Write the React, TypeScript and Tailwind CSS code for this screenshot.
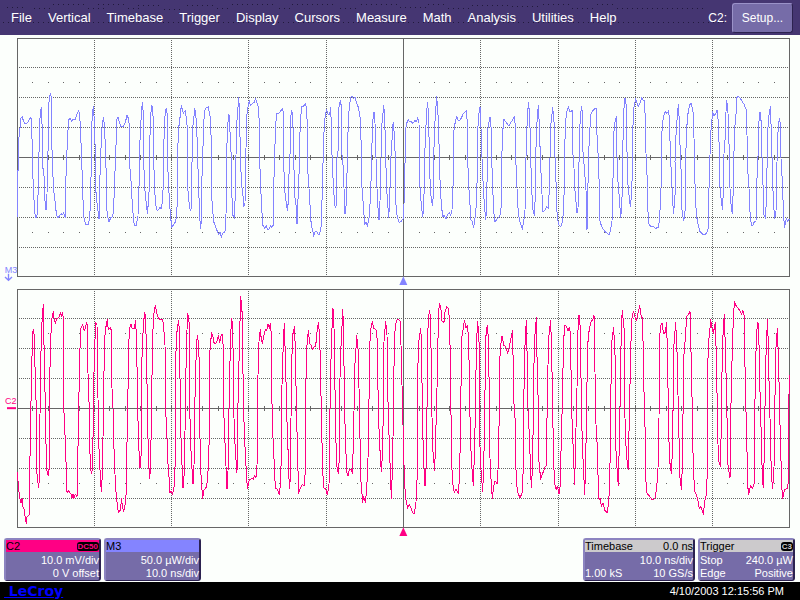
import type { ReactNode } from "react";

const menuItems = [
  "File",
  "Vertical",
  "Timebase",
  "Trigger",
  "Display",
  "Cursors",
  "Measure",
  "Math",
  "Analysis",
  "Utilities",
  "Help",
];

// x,y pairs on the 2400 x 753 scope canvas
const powerTrace = `52,547 52,407 55,407 55,325 58,297 61,270 63,250 67,244 70,258 75,267 82,264 86,258 91,247 94,252 97,340 97,372 100,460 103,512 106,547 109,547 112,535 115,455 115,375 118,340 118,280 121,235 124,217 127,290 127,385 133,430 133,460 136,515 138,525 141,480 142,365 145,340 145,215 149,185 151,175 154,188 154,300 157,365 160,455 163,485 167,512 169,540 174,550 180,540 184,536 187,540 191,533 196,547 197,450 200,370 203,300 206,255 211,250 215,260 219,252 225,255 230,240 236,227 239,235 242,300 245,370 248,470 251,545 257,568 266,568 270,530 272,455 275,370 275,275 278,225 281,215 284,297 287,380 287,460 290,495 293,520 297,553 299,547 299,450 302,365 305,290 308,260 311,248 314,285 317,365 320,460 320,520 323,545 327,562 332,548 338,545 341,520 344,430 347,370 350,255 354,247 358,262 363,275 369,275 376,263 381,240 385,250 388,270 388,375 394,450 397,510 400,545 403,572 408,572 414,545 415,460 418,450 418,355 421,295 424,235 427,203 430,235 431,380 434,455 437,490 440,515 442,535 445,505 448,455 448,355 451,275 454,210 457,215 460,255 461,375 464,460 466,500 470,525 475,525 480,518 485,522 489,465 491,455 491,355 493,275 496,230 499,220 502,240 502,365 506,455 509,510 512,545 515,577 520,570 525,563 530,545 533,460 533,350 536,280 541,240 544,211 547,225 550,235 556,226 559,250 562,280 563,365 563,455 567,500 571,528 574,520 575,400 578,350 578,280 582,245 584,220 587,238 590,270 593,370 596,460 599,545 602,580 605,545 605,455 608,365 611,275 613,230 617,220 625,215 628,232 632,255 634,340 634,460 637,515 641,560 648,578 656,600 660,592 664,607 668,595 675,590 678,540 679,460 680,355 683,270 687,238 689,270 693,350 694,370 695,460 698,540 704,550 706,455 708,360 710,270 713,230 716,187 719,235 721,370 725,450 730,490 731,515 735,510 736,370 738,340 740,245 744,215 748,195 751,213 758,205 763,202 766,190 770,200 775,215 778,265 779,360 781,440 784,495 788,570 795,580 799,570 802,582 807,582 812,572 816,577 820,570 821,460 824,360 827,265 831,235 836,235 842,228 848,222 850,235 851,365 853,455 857,490 862,527 865,500 868,380 871,345 871,270 874,225 878,235 881,365 884,480 888,510 891,568 893,530 895,455 898,400 898,355 901,260 905,215 911,213 916,205 919,217 922,270 923,400 927,460 930,510 934,575 938,585 941,605 944,592 949,588 955,600 959,597 964,570 967,460 970,350 973,265 977,235 980,222 983,237 989,237 992,218 994,270 996,360 1000,450 1004,510 1007,517 1010,505 1011,370 1014,350 1015,230 1019,205 1022,197 1025,230 1025,350 1030,400 1032,460 1034,535 1037,535 1040,470 1042,360 1045,260 1048,215 1052,187 1056,185 1060,190 1066,188 1070,205 1075,217 1080,245 1085,360 1086,460 1090,510 1094,570 1098,560 1102,574 1107,550 1112,480 1115,360 1118,260 1122,232 1125,265 1128,370 1131,460 1134,520 1137,556 1140,500 1143,370 1146,265 1151,212 1154,240 1157,365 1160,460 1166,548 1169,500 1172,380 1175,335 1178,275 1180,262 1183,300 1186,370 1187,500 1191,540 1197,562 1203,560 1209,552 1210,548 1212,510 1214,400 1216,370 1216,290 1220,265 1225,254 1228,260 1233,259 1239,265 1245,257 1250,260 1253,247 1257,265 1258,370 1260,455 1264,510 1268,545 1271,520 1273,440 1275,340 1278,270 1282,203 1286,235 1288,370 1291,460 1294,495 1298,512 1301,455 1301,370 1304,275 1310,185 1313,220 1316,275 1318,375 1321,465 1325,520 1329,545 1332,541 1338,553 1342,541 1348,532 1352,541 1356,525 1359,455 1361,380 1361,295 1364,270 1370,245 1374,255 1379,257 1385,247 1390,235 1397,230 1400,227 1402,275 1403,370 1406,450 1411,525 1413,555 1417,560 1421,577 1425,550 1430,500 1432,390 1434,275 1437,235 1440,215 1443,280 1446,370 1450,460 1454,520 1457,553 1460,520 1462,370 1464,280 1470,245 1473,275 1475,370 1478,455 1481,530 1485,562 1490,553 1496,547 1501,538 1504,510 1505,380 1508,290 1512,253 1519,263 1526,273 1533,262 1538,255 1543,245 1546,275 1547,365 1551,460 1554,520 1558,555 1567,583 1571,560 1575,525 1577,460 1578,365 1581,275 1585,203 1589,235 1592,365 1595,465 1599,525 1603,542 1607,460 1607,370 1610,275 1615,210 1618,270 1621,365 1625,460 1629,530 1635,525 1640,515 1645,520 1648,460 1650,370 1652,275 1658,218 1662,260 1665,365 1669,465 1671,530 1675,567 1682,575 1687,560 1690,535 1693,455 1694,355 1696,270 1700,230 1705,215 1710,230 1717,227 1719,360 1722,400 1724,455 1728,500 1731,535 1734,520 1736,400 1739,350 1739,280 1742,245 1744,214 1748,235 1749,350 1753,400 1758,465 1761,585 1763,520 1765,375 1769,295 1772,240 1777,228 1785,220 1790,222 1791,300 1795,370 1798,460 1799,555 1805,575 1815,590 1828,600 1832,580 1836,560 1838,460 1841,370 1841,300 1845,260 1849,245 1851,365 1854,440 1858,490 1862,547 1865,520 1867,455 1868,360 1871,230 1875,190 1880,220 1881,350 1884,450 1888,490 1891,515 1895,475 1898,370 1899,270 1902,215 1907,190 1911,205 1915,214 1920,205 1925,188 1929,195 1934,197 1936,270 1938,355 1942,440 1944,530 1947,567 1951,573 1960,575 1967,580 1975,577 1979,550 1983,460 1985,370 1986,290 1990,245 1996,230 2001,235 2006,228 2009,265 2011,370 2015,420 2017,490 2021,535 2025,480 2025,380 2028,300 2031,255 2035,208 2038,260 2041,365 2044,420 2046,525 2051,558 2055,530 2057,370 2060,280 2065,225 2070,208 2074,205 2080,235 2082,310 2084,420 2088,520 2092,560 2100,590 2108,598 2115,600 2121,592 2125,580 2127,460 2130,360 2133,285 2138,230 2141,243 2146,238 2151,226 2155,260 2158,350 2160,455 2164,500 2168,523 2170,460 2171,370 2175,315 2178,230 2180,195 2184,235 2188,355 2190,460 2194,520 2197,535 2200,460 2202,350 2205,270 2209,225 2211,187 2215,184 2221,190 2227,200 2232,208 2238,222 2241,300 2243,400 2247,460 2250,530 2254,572 2259,570 2263,560 2268,558 2270,450 2274,365 2276,270 2280,230 2284,265 2286,365 2289,450 2292,540 2297,550 2300,455 2303,290 2307,240 2311,215 2314,290 2317,400 2320,500 2324,550 2328,530 2331,380 2334,290 2338,250 2342,270 2343,370 2347,440 2350,520 2353,577 2356,565 2359,550 2363,560 2366,553 2369,553`;

const voltageTrace = `52,560 55,600 58,632 63,655 67,640 68,665 73,675 76,700 79,715 81,695 88,690 89,577 92,400 95,250 98,147 100,133 103,155 106,290 109,372 109,540 112,580 116,607 119,570 120,390 122,240 125,125 130,58 131,130 134,278 137,400 139,550 145,572 148,545 149,295 152,160 156,100 160,80 162,100 166,115 171,100 177,97 181,83 184,95 188,82 191,115 191,360 196,470 199,560 201,622 206,617 213,628 216,638 219,628 221,642 226,627 231,637 233,540 236,375 239,220 242,130 248,118 253,138 257,125 260,112 263,130 264,265 268,380 269,480 272,555 275,567 278,540 281,300 284,190 287,112 291,120 294,340 296,470 300,555 304,620 308,550 309,460 311,310 314,160 318,125 322,103 325,135 331,127 335,140 336,310 339,370 341,460 344,550 348,620 353,670 355,682 361,675 365,640 367,665 371,680 375,660 379,620 380,525 383,370 386,200 388,130 393,118 397,132 403,130 407,106 410,180 413,370 416,480 420,550 424,500 425,240 430,120 434,82 437,97 440,240 443,400 445,520 449,580 452,540 454,400 457,210 460,95 466,60 470,85 475,98 480,105 486,103 490,115 495,180 497,390 500,410 502,510 506,560 510,625 514,618 518,628 523,600 526,520 526,280 529,160 532,130 536,105 539,155 540,280 543,460 546,540 549,610 553,560 555,440 558,250 561,135 563,85 567,110 568,300 571,450 574,520 579,597 583,520 584,370 587,270 589,185 592,150 596,180 598,250 600,460 602,550 604,590 608,640 612,615 620,605 624,560 627,490 628,220 632,170 635,143 639,155 642,173 646,177 651,168 655,152 659,172 664,148 668,150 670,200 671,370 674,450 677,520 681,613 684,560 686,420 689,270 692,150 695,100 698,120 700,250 702,400 706,500 711,563 713,400 716,270 719,150 722,35 727,90 730,350 733,440 736,510 742,610 748,585 755,580 760,583 764,570 768,578 771,540 773,450 774,270 777,170 781,132 784,165 787,175 792,150 797,132 800,137 804,118 808,130 811,115 814,150 815,320 819,460 823,540 826,610 832,613 838,628 842,590 845,460 846,300 850,170 853,115 857,250 861,410 865,520 868,610 871,580 873,400 875,240 878,150 884,125 887,250 890,400 893,520 896,625 900,612 907,598 912,603 916,560 917,335 920,190 925,137 929,175 934,182 938,195 942,185 947,185 950,150 955,112 959,150 962,280 965,430 968,560 972,610 977,612 982,630 987,600 989,430 992,260 995,150 999,70 1002,130 1004,250 1007,440 1010,540 1015,565 1018,520 1019,320 1022,200 1025,150 1028,72 1031,130 1033,350 1037,480 1040,560 1044,573 1048,555 1053,552 1057,565 1060,480 1062,380 1064,250 1068,190 1070,152 1075,200 1077,310 1080,460 1083,590 1088,652 1091,635 1096,652 1100,615 1104,520 1106,430 1109,180 1113,130 1117,108 1121,130 1129,135 1132,170 1135,380 1139,480 1144,560 1148,500 1150,350 1152,170 1157,108 1161,150 1164,350 1168,480 1174,640 1177,560 1179,460 1181,280 1185,140 1189,107 1193,102 1200,108 1203,180 1206,300 1209,420 1211,510 1214,600 1218,645 1223,670 1228,657 1234,672 1240,687 1243,685 1248,650 1251,590 1253,260 1257,165 1262,130 1265,180 1267,400 1271,530 1275,603 1280,520 1281,370 1284,130 1288,75 1292,100 1295,360 1299,500 1304,558 1307,460 1311,310 1314,160 1317,70 1319,55 1323,75 1325,108 1332,112 1335,80 1340,65 1345,70 1349,110 1352,310 1355,540 1359,600 1363,622 1368,612 1375,625 1379,570 1382,380 1385,160 1390,130 1393,105 1398,130 1402,122 1406,160 1409,350 1412,480 1416,550 1420,603 1424,480 1427,340 1429,180 1433,108 1437,170 1438,430 1442,540 1448,620 1451,550 1454,400 1457,160 1462,120 1466,170 1468,370 1470,520 1474,600 1477,640 1481,605 1485,587 1491,597 1495,540 1498,370 1499,230 1502,180 1506,153 1511,180 1517,185 1523,205 1528,185 1532,165 1538,137 1541,340 1545,400 1547,530 1550,600 1554,625 1560,638 1566,625 1570,550 1571,370 1574,200 1579,107 1582,240 1584,370 1588,450 1592,560 1594,607 1598,540 1600,370 1603,170 1609,98 1612,270 1615,360 1617,530 1622,583 1628,565 1635,547 1640,540 1641,400 1644,240 1647,150 1652,107 1655,200 1658,370 1661,540 1665,600 1669,615 1672,603 1677,628 1681,600 1683,500 1687,350 1689,250 1693,120 1698,122 1704,138 1708,128 1712,150 1714,350 1718,450 1724,598 1727,470 1731,310 1733,150 1737,90 1741,130 1744,350 1747,480 1751,560 1754,630 1757,540 1760,350 1763,180 1768,130 1773,110 1779,103 1782,90 1785,260 1787,400 1791,470 1795,600 1797,643 1801,640 1804,665 1809,655 1814,675 1821,683 1826,655 1829,590 1832,430 1834,180 1838,150 1841,128 1845,210 1847,480 1851,550 1855,602 1859,430 1862,250 1864,120 1867,77 1872,130 1875,400 1879,510 1885,555 1887,440 1890,300 1893,170 1896,100 1900,78 1905,95 1909,107 1914,85 1919,62 1923,90 1927,100 1930,200 1932,320 1936,460 1938,590 1941,625 1950,635 1956,645 1965,640 1970,610 1974,550 1977,410 1978,160 1983,120 1986,115 1991,147 1997,140 1999,112 2002,180 2005,370 2008,520 2014,565 2018,480 2021,190 2027,112 2031,200 2034,330 2037,460 2040,580 2045,615 2048,480 2051,220 2056,160 2060,95 2066,88 2070,78 2073,200 2077,380 2080,560 2085,620 2093,640 2098,672 2103,665 2110,688 2114,650 2119,630 2122,560 2122,270 2126,170 2130,130 2132,103 2136,130 2140,145 2146,112 2150,250 2153,460 2157,530 2161,545 2164,420 2166,260 2169,150 2173,88 2177,220 2180,350 2184,540 2190,580 2192,400 2196,230 2199,130 2203,50 2208,62 2215,70 2221,80 2225,90 2228,75 2233,95 2235,245 2238,380 2241,500 2243,600 2246,630 2252,600 2257,610 2263,595 2264,400 2267,230 2270,140 2274,112 2278,200 2280,320 2284,460 2287,580 2290,607 2293,500 2296,300 2299,170 2303,103 2306,250 2310,400 2314,570 2318,610 2322,550 2324,400 2327,200 2332,130 2336,240 2339,380 2342,490 2345,600 2348,640 2353,615 2362,610 2365,590 2366,360 2369,270`;

const columns = [283, 514, 745, 979, 1441, 1675, 1906, 2137];
const rows = [97, 187, 277, 457, 547, 637];
const ticks = Array.from({ length: 49 }, (_, i) => i + 1).filter((i) => i % 5 !== 0);

function tickX(i: number) {
  return Math.round(17 + i * 15.45 - 0.2) * 3 + 1;
}

type ScopeProps = {
  name: string;
  color: string;
  points: string;
  shift: number;
  children: ReactNode;
};

function Scope({ name, color, points, shift, children }: ScopeProps) {
  return (
    <svg viewBox="0 0 2400 753" className="block w-full h-auto" role="img" aria-label={name}>
      <g fill="none" stroke="#666666" strokeWidth="3" shapeRendering="crispEdges">
        <g strokeDasharray="3 3">
          {columns.map((x) => (
            <path key={x} d={`M${x + 0.5} 15V720`} />
          ))}
          {rows.map((y) => (
            <path key={y} d={`M57 ${y + 0.5}H2366`} />
          ))}
        </g>
        <path d="M52.5 10.5H2368.5V724.5H52.5Z" />
        <path d="M52 367.5H2368M1210.5 10V724" />
        {ticks.map((i) => (
          <path key={i} d={`M${tickX(i) + 0.5} 360v15M${tickX(i) - 1} 142.5h3M${tickX(i) - 1} 592.5h3`} />
        ))}
        {columns.map((x) => (
          <path key={x} d={`M${x + 0.5} 360v15`} />
        ))}
      </g>
      <polyline
        points={points}
        transform={`translate(0 ${shift})`}
        fill="none"
        stroke={color}
        strokeWidth="3"
        strokeLinejoin="round"
        shapeRendering="crispEdges"
      />
      <path d="M1210 724L1222 750H1198Z" fill={color} />
      {children}
    </svg>
  );
}

// faint perforation on the menu bar
const highDots = "M53 4.500H86M98 4.500H126M138 5.500H161M187 5.500H214M232 4.500H277M292 4.500H337M361 4.500H399M428 4.500H446M472 5.500H510M543 4.500H570M597 4.500H615";
const lowDots = "M7 7.500H27M34 8.500H52M88 8.500H106M128 8.500H143M164 9.500H180M217 8.500H232M279 8.500H292M340 8.500H358M400 7.500H428M448 8.500H471M512 6.500H542M572 8.500H596M617 8.500H704";

function MenuBar() {
  return (
    <header className="relative flex h-[35px] items-center bg-[#453672] text-white">
      <svg className="absolute left-0 top-0 h-full w-full" aria-hidden="true">
        <g stroke="#21193c" strokeWidth="1" strokeDasharray="1 4" shapeRendering="crispEdges">
          <path d={highDots} />
          <path d={lowDots} />
          <path d="M3 22.500H728" />
        </g>
      </svg>
      <nav className="relative flex flex-1 gap-4 pl-[11px] text-[13px] leading-4">
        {menuItems.map((item) => (
          <button key={item} type="button">
            {item}
          </button>
        ))}
      </nav>
      <div className="relative flex items-center gap-[5px] pr-[7px] text-[12px]">
        <span>C2:</span>
        <button
          type="button"
          className="h-[30px] w-[61px] rounded-[3px] border border-b-[#2c2250] border-r-[#2c2250] border-l-[#9a92c8] border-t-[#9a92c8] bg-[#766ca8]"
        >
          Setup...
        </button>
      </div>
    </header>
  );
}

type CardProps = {
  title: string;
  className: string;
  bar: string;
  right?: ReactNode;
  lines: string[][];
};

function Card({ title, className, bar, right, lines }: CardProps) {
  return (
    <section
      className={`${className} rounded-[3px] border-2 border-b border-b-[#2c2250] border-r-[#2c2250] border-l-[#8c84c0] border-t-[#8c84c0] bg-[#766ca8] text-[11px] leading-[13px] text-white`}
    >
      <h2 className={`${bar} flex h-3 items-center justify-between text-black`}>
        {title}
        {right}
      </h2>
      {lines.map(([left, value]) => (
        <p key={value} className="flex justify-between first-of-type:mt-[2px]">
          <span>{left}</span>
          <span>{value}</span>
        </p>
      ))}
    </section>
  );
}

export default function App() {
  return (
    <div className="flex min-h-screen flex-col bg-[#fcfffc] font-['Liberation_Sans',Arial,sans-serif]">
      <MenuBar />
      <main className="flex-1">
        <Scope name="M3" color="#8484ff" points={powerTrace} shift={0}>
          <text x="14" y="714" fontSize="27" fill="#8484ff">M3</text>
          <path d="M25.500 716V736M15 726L25.500 736L36 726" fill="none" stroke="#8484ff" strokeWidth="4" />
        </Scope>
        <Scope name="C2" color="#ff0084" points={voltageTrace} shift={-3}>
          <text x="15" y="354" fontSize="27" fill="#ff0084">C2</text>
          <path d="M21 366.500H48" stroke="#ff0084" strokeWidth="6" />
        </Scope>
        <div className="flex gap-[3px] pl-1 pr-[5px] pt-px">
          <Card
            title="C2"
            className="w-[97px]"
            bar="bg-[#ff0084]"
            right={
              <span className="rounded-[3px] bg-black px-px text-[8px] font-bold leading-[9px] text-[#ff0084]">DC50</span>
            }
            lines={[["", "10.0 mV/div"], ["", "0 V offset"]]}
          />
          <Card
            title="M3"
            className="w-[97px]"
            bar="bg-[#8484ff]"
            lines={[["", "50.0 µW/div"], ["", "10.0 ns/div"]]}
          />
          <Card
            title="Timebase"
            className="ml-auto w-[112px]"
            bar="bg-[#cccacc]"
            right={<span>0.0 ns</span>}
            lines={[["", "10.0 ns/div"], ["1.00 kS", "10 GS/s"]]}
          />
          <Card
            title="Trigger"
            className="w-[97px]"
            bar="bg-[#cccacc]"
            right={
              <span className="rounded-[3px] bg-black px-px text-[8px] font-bold leading-[9px] text-[#cccacc]">C3</span>
            }
            lines={[["Stop", "240.0 µW"], ["Edge", "Positive"]]}
          />
        </div>
      </main>
      <footer className="flex h-[18px] items-center justify-between bg-black pl-1 pr-4">
        <a href="#" className="font-['DejaVu_Sans',sans-serif] text-[14px] font-bold leading-[18px] text-[#0000ff] underline">
          &nbsp;LeCroy
        </a>
        <time className="text-[11px] text-white">4/10/2003 12:15:56 PM</time>
      </footer>
    </div>
  );
}
